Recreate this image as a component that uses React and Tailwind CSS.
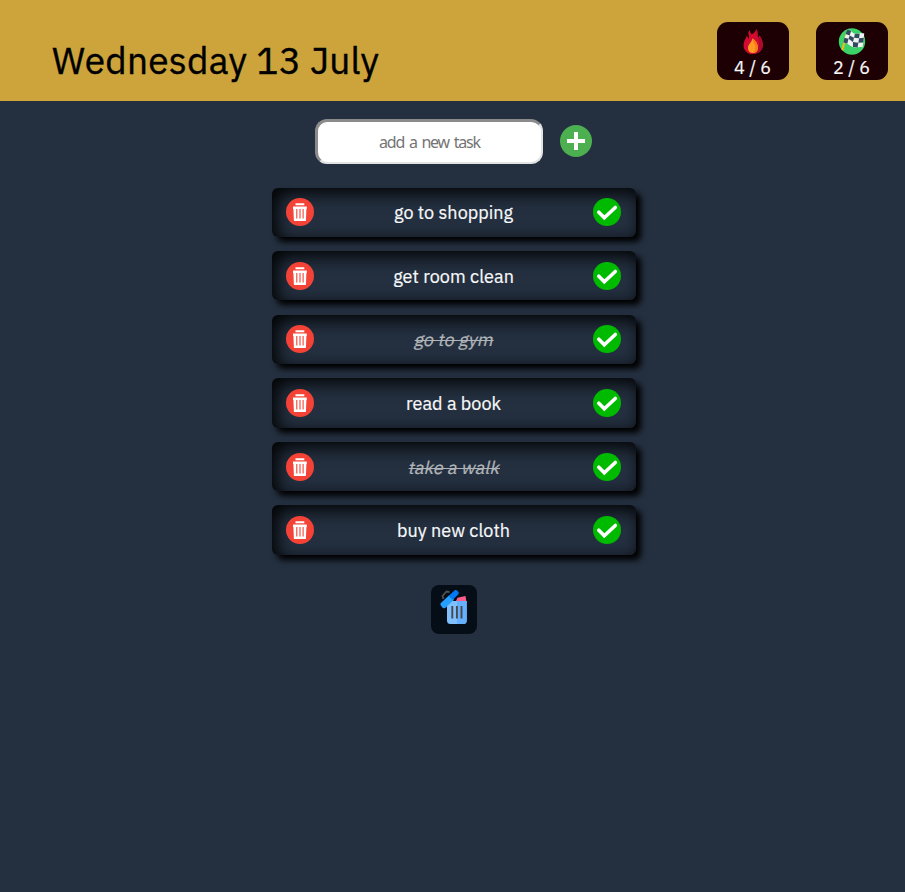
const TASKS = [
  { text: "go to shopping", done: false },
  { text: "get room clean", done: false },
  { text: "go to gym", done: true },
  { text: "read a book", done: false },
  { text: "take a walk", done: true },
  { text: "buy new cloth", done: false },
];

function FlameIcon() {
  return (
    <svg viewBox="0 0 28 28" className="block h-7 w-7">
      <path fill="#d50a30" d="M14 27C8 27 4.200 23 4.200 17.800c0-3.800 2-6 3.300-9.800.9 1 1.500 2 1.700 3.400.9-1.400.9-2.900.3-4.400-.8-2-.2-3.600 1.300-4.600 0 1.800.6 2.800 1.800 4C15 5.500 16.800 4 17.200 1c2.500 3 1.300 5.800 2.400 8.800.8-.6 1-1.300 1-2.300 2.300 3.200 3.600 6 3.600 10.200C24.200 23 20 27 14 27z" />
      <path fill="#ad0b2b" d="M14 27c6 0 10.200-4 10.200-9.300 0-4.200-1.300-7-3.600-10.200 0 1-.2 1.700-1 2.300-1.100-3 .1-5.800-2.400-8.800.3 5 .8 7 2.300 11 2.300 6-.5 12-5.500 15z" />
      <path fill="#ff9b22" d="M14 26c-3.300 0-5.200-2-5.200-5.200 0-3.800 3.500-5.300 4.700-9.800 3.400 2.300 5.600 5.800 5.600 9.500 0 3.300-2 5.500-5.100 5.500z" />
      <path fill="#f57c1e" d="M14 26c3.100 0 5.100-2.200 5.100-5.500 0-3.700-2.200-7.200-5.600-9.500 0 2 1 3.500 2.200 6s1.300 6-1.700 9z" />
    </svg>
  );
}

function FlagIcon() {
  return (
    <svg viewBox="0 0 28 28" className="block h-7 w-7">
      <circle cx="14" cy="14" r="13.700" fill="#3bd267" />
      <path d="M8.300 6 4 23" stroke="#fbb81c" strokeWidth="2" />
      <path fill="#f1f2f2" d="M9.500 1.300c4 .5 4.500 4.700 8.500 4.700 3 0 5-.8 8.700-.3L25 20c-4-.7-6.500 1-10-.3C11.500 18.500 9.500 15.500 5 15z" />
      <path fill="#324a5e" d="m9.500 1.300 3.600 1.900-1.500 4.600-4.300-1.500zM17 5.900l5 .1-.7 4.500-5.200-.4zM11.600 7.800l4.500 2.300-1.100 4.500-4.600-3.400zM21.300 10.500l5-.3-.7 4.800-5 .2zM6.200 10.200l4.200 1-1.200 5L5 15zM15 14.600l5.600.6-.8 4.900-4.800-.4z" />
    </svg>
  );
}

function DeleteIcon() {
  return (
    <svg viewBox="0 0 28 28" className="block h-7 w-7 shrink-0">
      <circle cx="14" cy="14" r="14" fill="#f44336" />
      <path fill="#fff" d="M9.500 5.300h8.800v2H9.500zM7 8.400h13.800v2.500h-.4L19.900 23H7.900L7.400 10.900H7z" />
      <path d="M10.800 11v9.500M14 11v9.500M17.100 11v9.500" stroke="#f44336" strokeWidth="1.100" />
    </svg>
  );
}

function DoneIcon() {
  return (
    <svg viewBox="0 0 28 28" className="block h-7 w-7 shrink-0">
      <circle cx="14" cy="14" r="14" fill="#00ba00" />
      <path d="m5.800 14.200 5.500 5.500L22.300 9.500" fill="none" stroke="#fff" strokeWidth="3.600" strokeLinecap="round" />
    </svg>
  );
}

function ClearIcon() {
  return (
    <svg viewBox="0 0 28 36" className="block h-9 w-7">
      <path d="m3.500 10-1-3 4-4.500 3 .5" fill="none" stroke="#505050" strokeWidth="1.800" />
      <path fill="#ff5e8a" d="m16 12 1.500-3.200 8-1.800.8 5H16z" />
      <path fill="#80c0ff" d="M7 12h19.700v19.500a3.500 3.500 0 0 1-3.500 3.500H10.500A3.500 3.500 0 0 1 7 31.500z" />
      <path fill="#64b0ff" d="M17 12h9.700v19.500a3.500 3.500 0 0 1-3.500 3.500H17z" />
      <path d="M12.300 17v12.500M16.900 17v12.500M21.500 17v12.500" stroke="#484848" strokeWidth="1.900" />
      <path fill="#26a0ff" d="m.9 14 8.300-7.800 4.800 4.600-8.500 8c-1 .9-2.200.5-3 0L.9 16.600c-.6-.7-.6-1.900 0-2.600z" />
      <path fill="#0078f5" d="m8.500 6.900 6-5.300c1-.8 1.900-.6 2.700.2l1 1c.8 1 .7 1.900 0 2.600l-5.400 5.400z" />
    </svg>
  );
}

function Counter({ icon, label }) {
  return (
    <div className="flex h-[58px] w-[72px] flex-col items-center rounded-[11px] bg-[#1c0003] pt-[6px] text-[18px] leading-[24px] text-[#f8f6f6]">
      {icon}
      <span className="mt-px [-webkit-text-stroke:0.2px]">{label}</span>
    </div>
  );
}

export default function App() {
  return (
    <div className="min-h-screen bg-[#243040] font-['IBM_Plex_Sans','Open_Sans',sans-serif]">
      <header className="flex h-[101px] items-start justify-between bg-[#cca43b] pr-[17.400px] pl-[52px]">
        <h1 className="mt-[33px] text-[37px] leading-[54px] font-normal tracking-[0.250px] whitespace-nowrap text-black [-webkit-text-stroke:0.400px]">Wednesday 13 July</h1>
        <div className="mt-[22px] flex gap-[27px]">
          <Counter icon={<FlameIcon />} label="4 / 6" />
          <Counter icon={<FlagIcon />} label="2 / 6" />
        </div>
      </header>
      <main className="flex flex-col items-center pl-[2px]">
        <form className="mt-[18px] flex w-[277px] items-center justify-between">
          <input
            placeholder="add a new task"
            className="h-[45px] w-[228px] rounded-[12px] border-t-[3px] border-r-2 border-b-2 border-l-[3px] border-t-[#8b8b8b] border-r-[#e2e2e2] border-b-[#e2e2e2] border-l-[#8b8b8b] bg-white text-center font-['Noto_Sans',sans-serif] text-[16px] tracking-[-1.200px] [word-spacing:1.800px] placeholder:text-[#757575]"
          />
          <svg viewBox="0 0 32 32" className="mb-[2px] block h-8 w-8">
            <circle cx="16" cy="16" r="16" fill="#4caf50" />
            <path d="M7 14h7V7h4v7h7v4h-7v7h-4v-7H7z" fill="#fff" />
          </svg>
        </form>
        <ul className="mt-[23.500px] flex flex-col gap-[14.200px]">
          {TASKS.map((task) => (
            <li key={task.text} className="flex h-[49.400px] w-[364px] items-center justify-between rounded-[6px] pr-[14.400px] pl-[14px] text-[18px] tracking-[0.050px] text-[#f8f9fa] shadow-[5px_5px_6px_#000,inset_5px_5px_18px_#000]">
              <DeleteIcon />
              <span className={task.done ? "ml-[2px] inline-block -skew-x-[13deg] pt-px whitespace-nowrap text-[#b0b4b8] line-through decoration-1 [-webkit-text-stroke:0.200px]" : "ml-[0.500px] pt-px whitespace-nowrap [-webkit-text-stroke:0.200px]"}>{task.text}</span>
              <DoneIcon />
            </li>
          ))}
        </ul>
        <button className="mt-[30px] flex h-[49px] w-[46px] items-center justify-center rounded-[8px] bg-[#050d17] pb-[4px]">
          <ClearIcon />
        </button>
      </main>
    </div>
  );
}
